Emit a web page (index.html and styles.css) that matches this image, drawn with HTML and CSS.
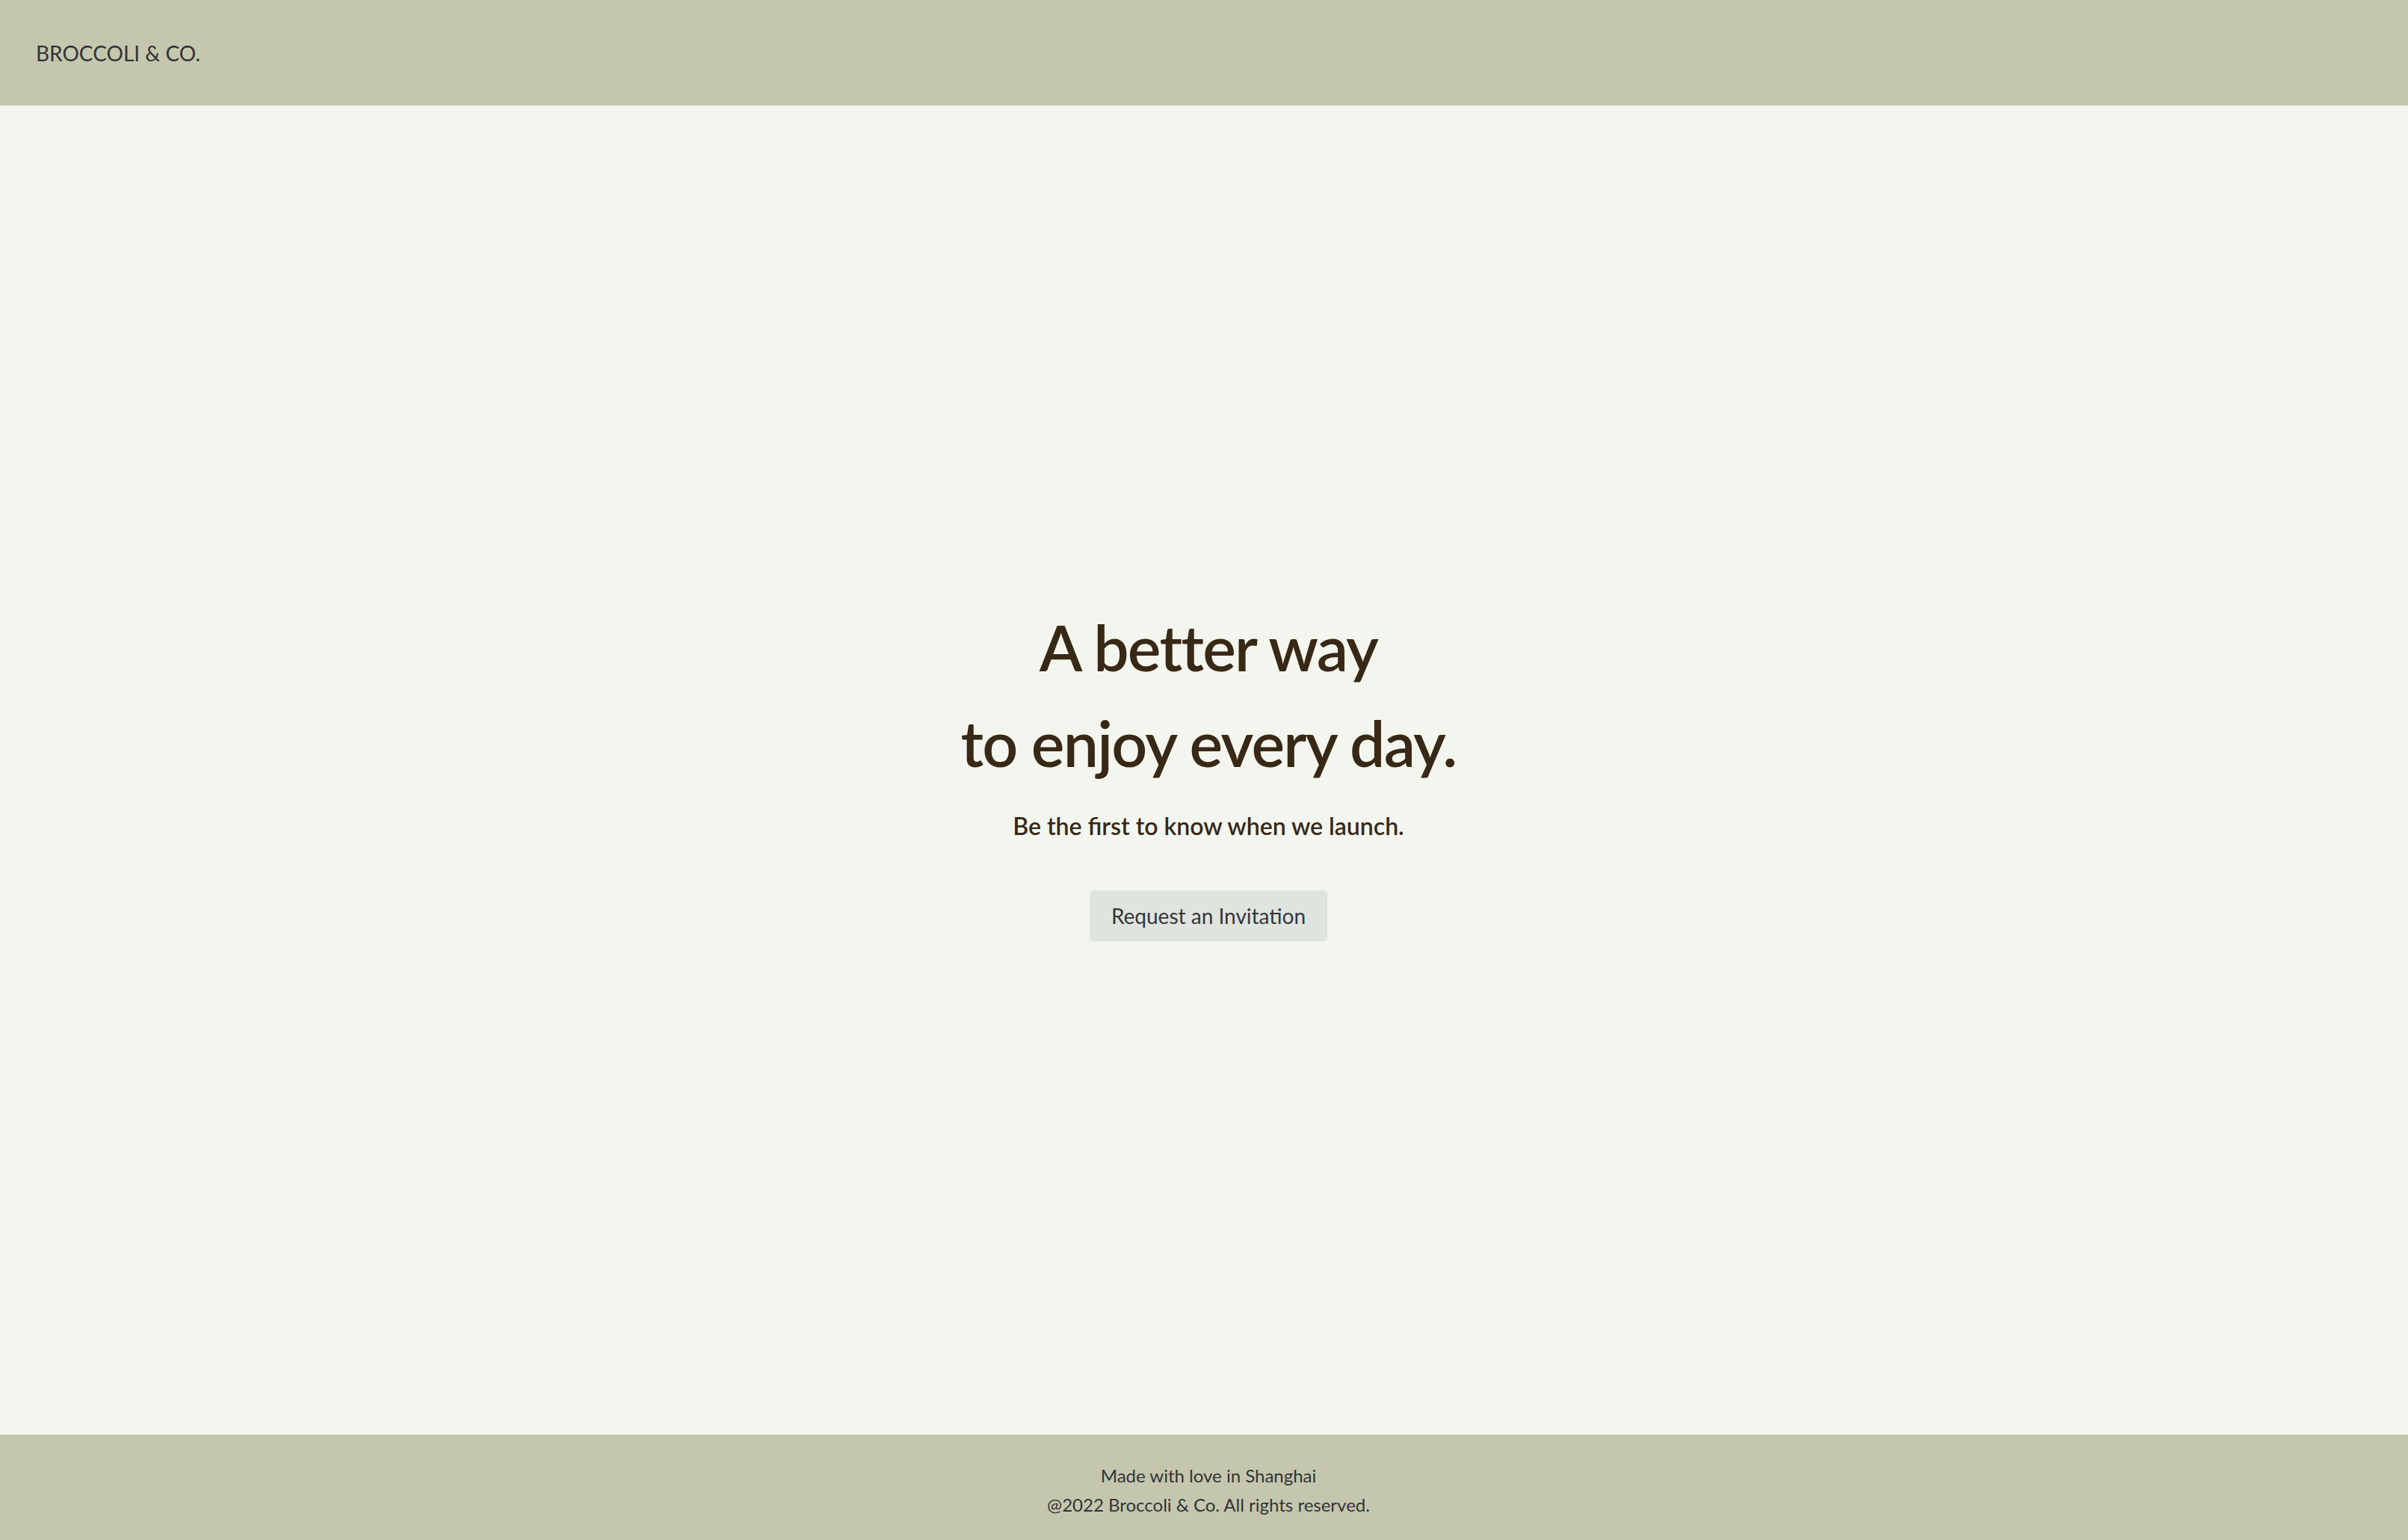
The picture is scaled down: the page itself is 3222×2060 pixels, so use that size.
FILE: index.html
```html
<!DOCTYPE html>
<html lang="en">
<head>
<meta charset="utf-8">
<title>Broccoli &amp; Co.</title>
<link rel="stylesheet" href="styles.css">
</head>
<body>
<div class="page">
  <header class="site-header">
    <div class="brand">BROCCOLI &amp; CO.</div>
  </header>
  <main class="hero">
    <h1 class="hero-title">A better way<br>to enjoy every day.</h1>
    <p class="hero-sub">Be the first to know when we launch.</p>
    <button class="invite-btn" type="button">Request an Invitation</button>
  </main>
  <footer class="site-footer">
    <p class="footer-line">Made with love in Shanghai</p>
    <p class="footer-line">@2022 Broccoli &amp; Co. All rights reserved.</p>
  </footer>
</div>
</body>
</html>
```
FILE: styles.css
```css
* { box-sizing: border-box; }
html, body {
  margin: 0;
  padding: 0;
  height: 100%;
}
body {
  font-family: Lato, "Open Sans", "Liberation Sans", sans-serif;
  background: #f3f6ee;
  color: #323338;
}
.page {
  min-height: 100vh;
  display: flex;
  flex-direction: column;
}
.site-header {
  height: 141px;
  background: #c4c7ad;
  display: flex;
  align-items: center;
  padding-left: 48px;
}
.brand {
  font-size: 28px;
  color: #323338;
}
.hero {
  flex: 1;
  display: flex;
  flex-direction: column;
  align-items: center;
  justify-content: center;
  text-align: center;
  padding-left: 12px;
}
.hero-title {
  margin: 0;
  font-size: 84px;
  font-weight: 600;
  line-height: 128px;
  letter-spacing: -0.02em;
  color: #382816;
}
.hero-sub {
  margin: 23px 0 0;
  font-size: 32px;
  font-weight: 600;
  line-height: 48px;
  color: #382816;
}
.invite-btn {
  margin-top: 62px;
  height: 68px;
  padding: 0 29px;
  border: none;
  border-radius: 5px;
  background: #e0e4de;
  font-family: inherit;
  font-size: 28px;
  color: #34363b;
  cursor: pointer;
}
.site-footer {
  height: 141px;
  background: #c4c7ad;
  padding-top: 35px;
  padding-left: 12px;
  text-align: center;
}
.footer-line {
  margin: 0;
  font-size: 24px;
  line-height: 39px;
  color: #323338;
}
```
